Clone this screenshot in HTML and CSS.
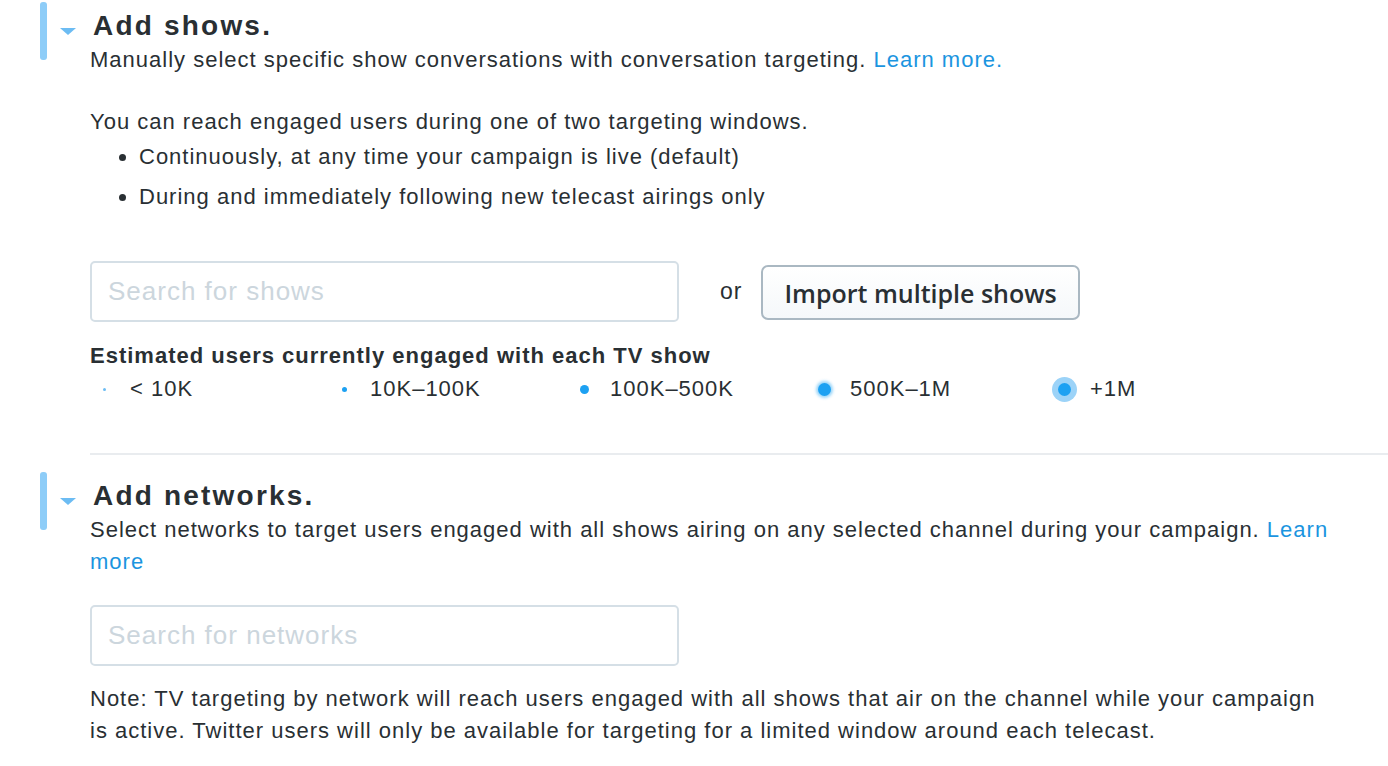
FILE: index.html
```html
<!DOCTYPE html>
<html lang="en">
<head>
  <meta charset="UTF-8" />
  <title>TV targeting</title>
  <link rel="stylesheet" href="styles.css">
</head>
<body>

  <div class="section">
    <div class="gutter">
      <span class="bar"></span>
      <span class="caret"></span>
    </div>
    <div class="body">
      <h2>Add shows.</h2>
      <p class="desc">Manually select specific show conversations with conversation targeting. <a href="#">Learn more.</a></p>

      <p class="intro">You can reach engaged users during one of two targeting windows.</p>
      <ul class="windows">
        <li>Continuously, at any time your campaign is live (default)</li>
        <li>During and immediately following new telecast airings only</li>
      </ul>

      <div class="search-row">
        <input type="text" class="search" placeholder="Search for shows" />
        <span class="or">or</span>
        <button type="button" class="import">Import multiple shows</button>
      </div>

      <div class="legend-title">Estimated users currently engaged with each TV show</div>
      <div class="legend">
        <div class="legend-item"><span class="dot-box"><span class="dot d1"></span></span>&lt; 10K</div>
        <div class="legend-item"><span class="dot-box"><span class="dot d2"></span></span>10K&ndash;100K</div>
        <div class="legend-item"><span class="dot-box"><span class="dot d3"></span></span>100K&ndash;500K</div>
        <div class="legend-item"><span class="dot-box"><span class="dot d4"></span></span>500K&ndash;1M</div>
        <div class="legend-item"><span class="dot-box"><span class="dot d5"></span></span>+1M</div>
      </div>
    </div>
  </div>

  <hr class="divider" />

  <div class="section">
    <div class="gutter">
      <span class="bar"></span>
      <span class="caret"></span>
    </div>
    <div class="body">
      <h2>Add networks.</h2>
      <p class="desc">Select networks to target users engaged with all shows airing on any selected channel during your campaign. <a href="#">Learn more</a></p>

      <input type="text" class="search networks" placeholder="Search for networks" />

      <p class="note">Note: TV targeting by network will reach users engaged with all shows that air on the channel while your campaign is active. Twitter users will only be available for targeting for a limited window around each telecast.</p>
    </div>
  </div>

</body>
</html>
```

FILE: styles.css
```css
body {
  margin: 0;
  font-family: "Liberation Sans", Arial, sans-serif;
  letter-spacing: 1px;
  color: #292f33;
  background: #fff;
}
.section {
  display: flex;
}
.gutter {
  width: 90px;
  flex-shrink: 0;
  display: flex;
  align-items: flex-start;
}
.bar {
  display: block;
  width: 7px;
  height: 58px;
  margin: 2px 0 0 40px;
  background: #8ecdf8;
  border-radius: 3px;
}
.caret {
  display: block;
  width: 0;
  height: 0;
  margin: 28px 0 0 13px;
  border-left: 8px solid transparent;
  border-right: 8px solid transparent;
  border-top: 7px solid #6cbcf3;
}
.body {
  flex: 1;
  min-width: 0;
}
h2 {
  margin: 8px 0 0 3px;
  font-size: 28px;
  line-height: 36px;
  letter-spacing: 2.2px;
  font-weight: bold;
}
.desc {
  margin: 0;
  font-size: 22px;
  line-height: 32px;
  padding-right: 50px;
}
a {
  color: #1b95e0;
  text-decoration: none;
}
.intro {
  margin: 30px 0 0;
  font-size: 22px;
  line-height: 32px;
}
.windows {
  margin: 0;
  padding-left: 49px;
  font-size: 22px;
  line-height: 32px;
}
.windows li {
  margin-top: 3px;
}
.windows li + li {
  margin-top: 8px;
}
.search-row {
  display: flex;
  align-items: center;
  margin-top: 48px;
}
.search {
  width: 589px;
  height: 61px;
  box-sizing: border-box;
  padding: 0 16px;
  border: 2px solid #d5dfe6;
  border-radius: 5px;
  font-family: inherit;
  font-size: 26px;
  letter-spacing: 1px;
  color: #292f33;
  outline: none;
}
.search::placeholder {
  color: #ccd6dd;
}
.or {
  margin: 0 19px 0 41px;
  font-size: 23px;
}
.import {
  height: 55px;
  margin-top: 2px;
  padding: 0 21px;
  background: linear-gradient(#fff, #f5f8fa);
  border: 2px solid #aab8c2;
  border-radius: 7px;
  font-family: "Open Sans", sans-serif;
  font-weight: 600;
  font-size: 25px;
  letter-spacing: 0;
  color: #292f33;
}
.legend-title {
  margin-top: 20px;
  font-size: 22px;
  font-weight: bold;
  line-height: 28px;
}
.legend {
  display: flex;
  margin-top: 5px;
  font-size: 22px;
  line-height: 28px;
}
.legend-item {
  width: 240px;
  display: flex;
  align-items: center;
}
.dot-box {
  width: 28px;
  height: 28px;
  margin-right: 12px;
  display: flex;
  align-items: center;
  justify-content: center;
}
.dot {
  display: block;
  border-radius: 50%;
  background: #1da1f2;
}
.d1 {
  width: 3px;
  height: 3px;
  background: #6cbcf3;
}
.d2 {
  width: 5px;
  height: 5px;
}
.d3 {
  width: 9px;
  height: 9px;
}
.d4 {
  width: 13px;
  height: 13px;
  box-shadow: 0 0 3px 2px rgba(29, 161, 242, 0.45);
}
.d5 {
  width: 13px;
  height: 13px;
  box-shadow: 0 0 0 6px #9cd3f8;
}
.divider {
  margin: 50px 0 0 90px;
  border: none;
  border-top: 2px solid #e9ecef;
}
.section + .divider + .section {
  margin-top: 15px;
}
.networks {
  display: block;
  margin-top: 27px;
}
.note {
  margin: 17px 0 0;
  font-size: 22px;
  line-height: 32px;
  padding-right: 50px;
}
```
